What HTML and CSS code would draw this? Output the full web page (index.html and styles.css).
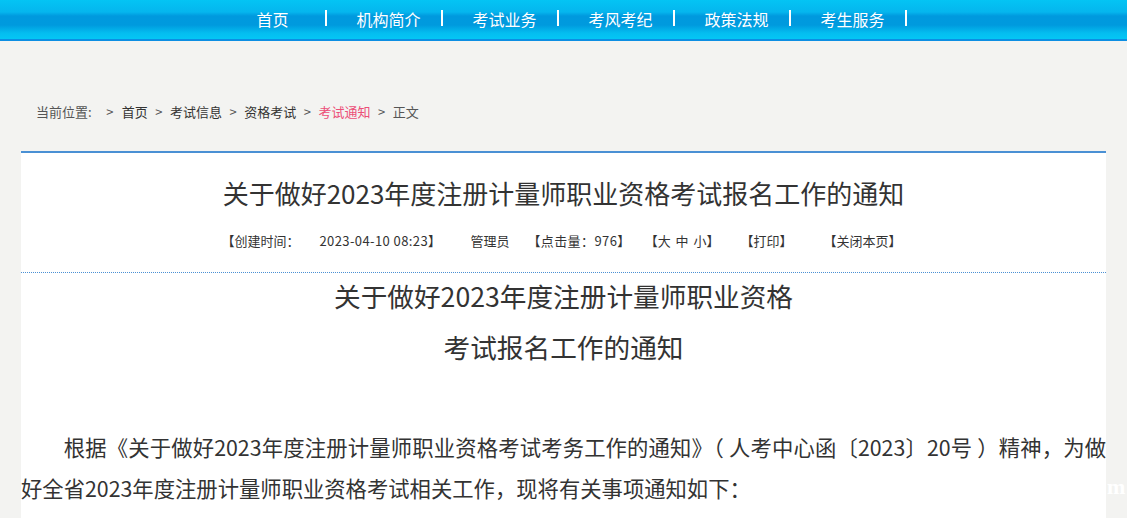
FILE: index.html
```html
<!DOCTYPE html>
<html lang="zh-CN">
<head>
<meta charset="utf-8">
<title>关于做好2023年度注册计量师职业资格考试报名工作的通知</title>
<link rel="stylesheet" href="styles.css">
</head>
<body>
<div class="nav">
  <ul class="nav-list">
    <li class="nav-item"><a class="nav-link">首页</a></li>
    <li class="nav-item"><a class="nav-link">机构简介</a></li>
    <li class="nav-item"><a class="nav-link">考试业务</a></li>
    <li class="nav-item"><a class="nav-link">考风考纪</a></li>
    <li class="nav-item"><a class="nav-link">政策法规</a></li>
    <li class="nav-item"><a class="nav-link">考生服务</a></li>
  </ul>
</div>

<div class="crumbs">
  <span class="crumb-label">当前位置:</span>
  <span class="crumb-sep first">&gt;</span>
  <a class="crumb-link">首页</a>
  <span class="crumb-sep">&gt;</span>
  <a class="crumb-link">考试信息</a>
  <span class="crumb-sep">&gt;</span>
  <a class="crumb-link">资格考试</a>
  <span class="crumb-sep">&gt;</span>
  <a class="crumb-link current">考试通知</a>
  <span class="crumb-sep">&gt;</span>
  <span class="crumb-label">正文</span>
</div>

<div class="panel">
  <h1 class="title">关于做好2023年度注册计量师职业资格考试报名工作的通知</h1>
  <div class="meta">
    <span class="m-a">【创建时间：</span>
    <span class="m-b">2023-04-10 08:23】</span>
    <span class="m-c">管理员</span>
    <span class="m-d">【点击量：976】</span>
    <span class="m-e">【大 中 小】</span>
    <span class="m-f">【打印】</span>
    <span class="m-g">【关闭本页】</span>
  </div>
  <div class="article">
    <div class="art-title">
      <span class="art-line">关于做好2023年度注册计量师职业资格</span>
      <span class="art-line">考试报名工作的通知</span>
    </div>
    <p class="para">根据《关于做好2023年度注册计量师职业资格考试考务工作的通知》（ 人考中心函〔2023〕20号 ）精神，为做好全省2023年度注册计量师职业资格考试相关工作，现将有关事项通知如下：</p>
  </div>
</div>
<span class="stray">m</span>
</body>
</html>
```

FILE: styles.css
```css
html, body {
  margin: 0;
  padding: 0;
}
body {
  background: #f3f3f1;
  font-family: "Noto Sans CJK SC", "Microsoft YaHei", sans-serif;
  color: #333;
  height: 518px;
  overflow: hidden;
  position: relative;
}
.nav {
  height: 39px;
  border-bottom: 2px solid #0c8ee3;
  background: linear-gradient(to bottom, #04c4f4 0px, #05b6ee 12px, #0099de 16px, #009ade 25px, #04bdf0 33px, #04c6f5 39px);
}
.nav-list {
  list-style: none;
  margin: 0;
  padding: 0 0 0 211px;
  display: flex;
  height: 39px;
}
.nav-item {
  width: 116px;
  display: flex;
  align-items: flex-start;
}
.nav-item::after {
  content: "";
  width: 2px;
  height: 16px;
  margin-top: 10px;
  background: #ffffff;
}
.nav-link {
  flex: 1;
  padding-left: 9px;
  text-align: center;
  color: #fff;
  font-size: 16px;
  line-height: 38px;
}
.crumbs {
  margin-top: 61px;
  padding-left: 36px;
  height: 20px;
  display: flex;
  align-items: center;
  gap: 7.5px;
  font-size: 13px;
  line-height: 20px;
  color: #555;
}
.crumb-sep.first {
  margin: 0 1px 0 7px;
}
.crumb-link {
  color: #333;
}
.crumb-link.current {
  color: #ec4f78;
}
.panel {
  width: 1085px;
  margin: 29px auto 0;
  background: #fff;
  border-top: 2px solid #4a90d4;
  height: 365px;
}
.title {
  margin: 0;
  padding-top: 20px;
  text-align: center;
  font-size: 26px;
  line-height: 40px;
  font-weight: normal;
  color: #333;
}
.meta {
  margin-top: 18px;
  display: flex;
  justify-content: center;
  font-size: 13px;
  line-height: 20px;
  color: #333;
  padding: 0 4px 21px 0;
  border-bottom: 1px dotted #4a90d4;
}
.m-b { margin-left: 20px; letter-spacing: 0.4px; }
.m-c { margin-left: 29px; }
.m-d { margin-left: 18px; letter-spacing: 0.4px; }
.m-e { margin-left: 14px; word-spacing: 2px; }
.m-f { margin-left: 21px; }
.m-g { margin-left: 31px; }
.art-title {
  display: flex;
  flex-direction: column;
  align-items: center;
  gap: 5px;
  font-size: 26.67px;
  color: #333;
}
.art-line {
  line-height: 46px;
}
.para {
  margin: 56px 0 0;
  font-size: 21.33px;
  line-height: 41px;
  text-indent: 2em;
  text-align: justify;
  color: #333;
}
.stray {
  position: absolute;
  left: 1107px;
  top: 474px;
  font-family: "Liberation Serif", serif;
  font-weight: bold;
  font-size: 22px;
  color: #fff;
}
```
